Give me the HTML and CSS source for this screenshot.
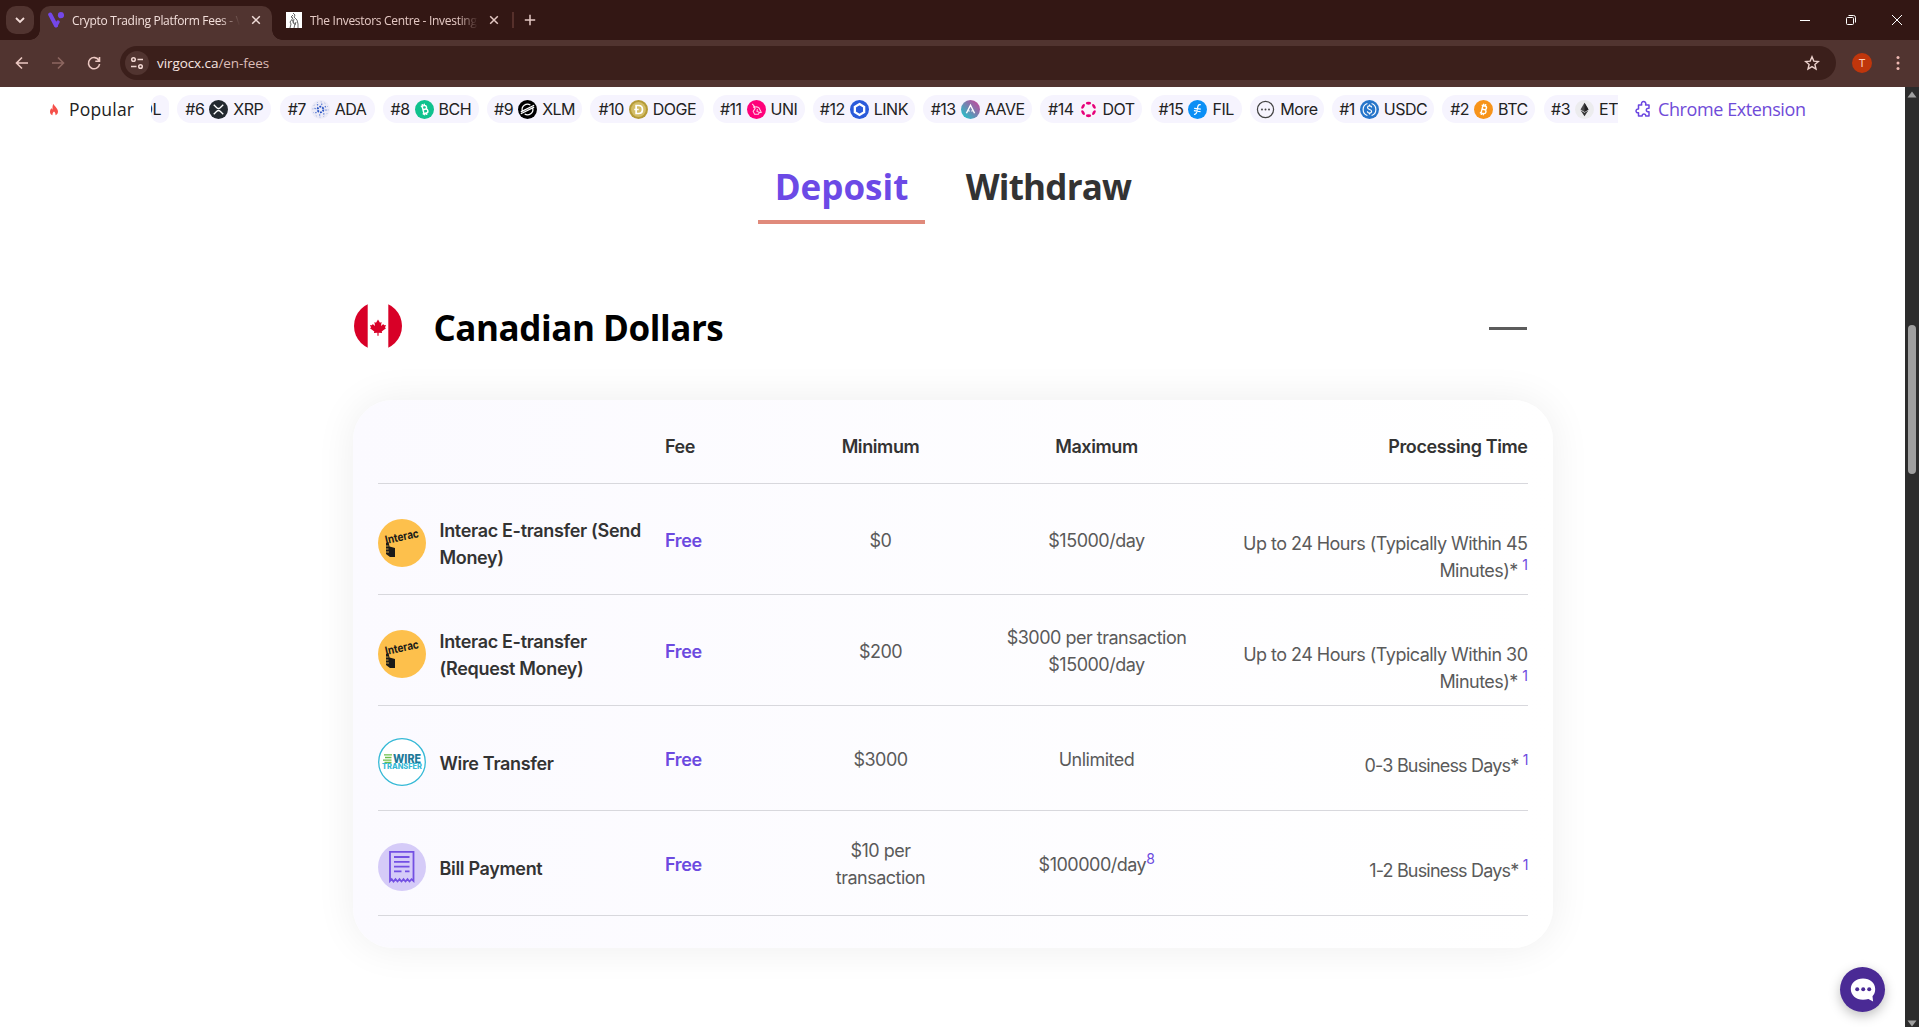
FILE: index.html
```html
<!DOCTYPE html>
<html lang="en">
<head>
    <meta charset="UTF-8">
    <meta name="viewport" content="width=device-width, initial-scale=1.0">
    <title>Crypto Trading Platform Fees - VirgoCX</title>
    <link rel="stylesheet" href="styles.css">
</head>
<body>
    <div class="tabstrip">
        <div class="tab-search">
            <svg width="12" height="12" viewBox="0 0 12 12"><path d="M2 4l4 4 4-4" fill="none" stroke="#f3dcd8" stroke-width="1.8"/></svg>
        </div>
        <div class="tab active">
            <svg class="favicon" width="16" height="16" viewBox="0 0 16 16"><path d="M2.2 2.500L8 13.500" stroke="#7447e8" stroke-width="4" stroke-linecap="round"/><path d="M8 13.500l2-3.500" stroke="#7447e8" stroke-width="3.500" stroke-linecap="round"/><circle cx="13" cy="3.200" r="3.100" fill="#7447e8"/></svg>
            <span class="tab-title">Crypto Trading Platform Fees - V</span>
            <svg class="tab-close" width="10" height="10" viewBox="0 0 10 10"><path d="M1.200 1.200l7.600 7.600M8.800 1.200l-7.600 7.600" stroke="#f0dcd8" stroke-width="1.500"/></svg>
        </div>
        <div class="tab">
            <svg class="favicon" width="16" height="16" viewBox="0 0 16 16"><rect width="16" height="16" fill="#fff"/><path d="M7 1l2 2-1 2 3 3 1 4v4M7 3L5 5l2 1-3 4 1 2-1 4M8 7l-1 4 2 1-1 4M10 10l-1 3M6 8l2 3" fill="none" stroke="#666" stroke-width="1"/></svg>
            <span class="tab-title">The Investors Centre - Investing</span>
            <svg class="tab-close" width="10" height="10" viewBox="0 0 10 10"><path d="M1.200 1.200l7.600 7.600M8.800 1.200l-7.600 7.600" stroke="#e5c9c4" stroke-width="1.500"/></svg>
        </div>
        <div class="tab-divider"></div>
        <svg class="new-tab" width="12" height="12" viewBox="0 0 12 12"><path d="M6 .8v10.400M.8 6h10.400" stroke="#e5c9c4" stroke-width="1.500"/></svg>
        <div class="window-buttons">
            <svg width="12" height="12" viewBox="0 0 12 12"><path d="M1 6.500h10" stroke="#fff"/></svg>
            <svg width="12" height="12" viewBox="0 0 12 12"><rect x="1.500" y="3.500" width="7" height="7" rx="1" fill="none" stroke="#fff"/><path d="M3.500 1.500h5a2 2 0 0 1 2 2v5" fill="none" stroke="#fff"/></svg>
            <svg width="12" height="12" viewBox="0 0 12 12"><path d="M1 1l10 10M11 1L1 11" stroke="#fff"/></svg>
        </div>
    </div>

    <div class="toolbar">
        <svg class="nav-icon" width="16" height="16" viewBox="0 0 16 16"><path d="M14 8H3M8 2.500L2.500 8 8 13.500" fill="none" stroke="#ecc8c2" stroke-width="1.600"/></svg>
        <svg class="nav-icon" width="16" height="16" viewBox="0 0 16 16"><path d="M2 8h11M8 2.500L13.500 8 8 13.500" fill="none" stroke="#8d6660" stroke-width="1.600"/></svg>
        <svg class="nav-icon" width="16" height="16" viewBox="0 0 16 16"><path d="M13 5.500A5.600 5.600 0 1 0 13.600 9M13.500 2v4.200H9.300" fill="none" stroke="#ecc8c2" stroke-width="1.600"/></svg>
        <div class="omnibox">
            <div class="site-info">
                <svg width="14" height="14" viewBox="0 0 14 14" fill="none" stroke="#f0d5d0" stroke-width="1.500"><circle cx="3.500" cy="3.500" r="1.800"/><path d="M7.500 3.500H13M1 10.500h5.500"/><circle cx="10.500" cy="10.500" r="1.800"/></svg>
            </div>
            <span class="url">virgocx.ca<span class="url-path">/en-fees</span></span>
            <svg class="star" width="16" height="16" viewBox="0 0 16 16"><path d="M8 1.800l1.800 4.300 4.600.4-3.500 3 1.100 4.500L8 11.600 4 14l1.100-4.500-3.500-3 4.600-.4z" fill="none" stroke="#ecd2cd" stroke-width="1.400"/></svg>
        </div>
        <div class="avatar">T</div>
        <svg class="menu-dots" width="4" height="16" viewBox="0 0 4 16" fill="#efb9b2"><circle cx="2" cy="2.500" r="1.500"/><circle cx="2" cy="8" r="1.500"/><circle cx="2" cy="13.500" r="1.500"/></svg>
    </div>

    <div class="viewport">
        <div class="page">
            <div class="popular-bar">
                <svg class="flame" width="10" height="13" viewBox="0 0 12 14"><path d="M5.500 0C6 3 10.800 5 10.800 9.300c0 2.500-1.500 4-3.100 4.700.5-2-.4-3.200-1.700-4.600-1.300 1.300-2.300 2.700-1.700 4.600C2.300 13.300 1.200 11.800 1.200 9.700c0-2.200 1.100-3.500 1.700-4.400.3 1 .6 1.500 1.300 1.700C4.200 4.500 4 2 5.500 0z" fill="#f5504a"/></svg>
                <span class="popular-label">Popular</span>
                <div class="ticker">
                    <div class="chip chip-sol"><span>SOL</span></div>
                    <div class="chip chip-94"><span>#6</span>
                        <svg class="coin" viewBox="0 0 20 20"><circle cx="10" cy="10" r="10" fill="#23292f"/><path d="M5 5l3.200 3.100a2.600 2.600 0 0 0 3.600 0L15 5M5 15l3.200-3.100a2.600 2.600 0 0 1 3.600 0L15 15" fill="none" stroke="#fff" stroke-width="1.400"/></svg>
                        <span>XRP</span></div>
                    <div class="chip chip-95"><span>#7</span>
                        <svg class="coin" viewBox="0 0 20 20"><circle cx="10" cy="10" r="10" fill="#ecebf7"/><circle cx="10" cy="10" r="3" fill="none" stroke="#2a55c5" stroke-width="2" stroke-dasharray="2 1.140"/><circle cx="10" cy="10" r="5.800" fill="none" stroke="#4c70cf" stroke-width="1.300" stroke-dasharray="1.300 3.255"/><circle cx="10" cy="10" r="8" fill="none" stroke="#8ca2df" stroke-width="1" stroke-dasharray="1 3.190"/></svg>
                        <span>ADA</span></div>
                    <div class="chip chip-96"><span>#8</span>
                        <svg class="coin" viewBox="0 0 20 20"><circle cx="10" cy="10" r="10" fill="#10c28e"/><g transform="rotate(-14 10 10)" fill="none" stroke="#fff" stroke-width="1.500"><path d="M7 6h3.700a1.900 1.900 0 0 1 0 3.900H8.500 11a2.100 2.100 0 0 1 0 4.200H7M8.400 6v8M9 4v2M11 4v2M9 14v2M11 14v2"/></g></svg>
                        <span>BCH</span></div>
                    <div class="chip chip-95"><span>#9</span>
                        <svg class="coin" viewBox="0 0 20 20"><circle cx="10" cy="10" r="10" fill="#000"/><g fill="none" stroke="#fff" stroke-width="1.300"><path d="M4.500 11.500a5.700 5.700 0 0 1 8.500-6.300M15.500 8.500a5.700 5.700 0 0 1-8.500 6.300M3 12.500L17 5.500M3 14.500l14-7"/></g></svg>
                        <span>XLM</span></div>
                    <div class="chip chip-114"><span>#10</span>
                        <svg class="coin" viewBox="0 0 20 20"><circle cx="10" cy="10" r="10" fill="#b49a36"/><circle cx="10" cy="10" r="7.800" fill="#d3bd67"/><path d="M7.500 5.800h2.700c5.300 0 5.300 8.400 0 8.400H7.500zM5.500 10h4.700" fill="none" stroke="#fff" stroke-width="1.800"/></svg>
                        <span>DOGE</span></div>
                    <div class="chip chip-92"><span>#11</span>
                        <svg class="coin" viewBox="0 0 20 20"><circle cx="10" cy="10" r="10" fill="#ff007a"/><path d="M5.500 4l3 3.500c2-.8 4.500.5 5 2.500l1.500 3-2 .5M6.500 7l2 2-2 3 1.500 3h4l1-2-2.500-1 .5-2.500" fill="none" stroke="#ffd3e7" stroke-width="1.100"/></svg>
                        <span>UNI</span></div>
                    <div class="chip chip-102"><span>#12</span>
                        <svg class="coin" viewBox="0 0 20 20"><circle cx="10" cy="10" r="10" fill="#2a5ada"/><path d="M10 4.300l4.900 2.850v5.700L10 15.700l-4.900-2.850v-5.700z" fill="none" stroke="#fff" stroke-width="2.400"/></svg>
                        <span>LINK</span></div>
                    <div class="chip chip-109"><span>#13</span>
                        <svg class="coin" viewBox="0 0 20 20"><defs><linearGradient id="aave" x1="1" y1="0" x2="0" y2="1"><stop offset=".15" stop-color="#b6509e"/><stop offset=".85" stop-color="#2ebac6"/></linearGradient></defs><circle cx="10" cy="10" r="10" fill="url(#aave)"/><path d="M5.700 14L10 5.500 14.300 14M8 11.500h1M11 11.500h1" fill="none" stroke="#fff" stroke-width="1.500"/></svg>
                        <span>AAVE</span></div>
                    <div class="chip chip-102"><span>#14</span>
                        <svg class="coin" viewBox="0 0 20 20"><circle cx="10" cy="10" r="10" fill="#faf5fb"/><g fill="#e6007a"><ellipse cx="10" cy="3.400" rx="2.800" ry="1.500"/><ellipse cx="10" cy="16.600" rx="2.800" ry="1.500"/><ellipse cx="10" cy="3.400" rx="2.800" ry="1.500" transform="rotate(60 10 10)"/><ellipse cx="10" cy="3.400" rx="2.800" ry="1.500" transform="rotate(120 10 10)"/><ellipse cx="10" cy="3.400" rx="2.800" ry="1.500" transform="rotate(240 10 10)"/><ellipse cx="10" cy="3.400" rx="2.800" ry="1.500" transform="rotate(300 10 10)"/></g></svg>
                        <span>DOT</span></div>
                    <div class="chip chip-91"><span>#15</span>
                        <svg class="coin" viewBox="0 0 20 20"><circle cx="10" cy="10" r="10" fill="#0b8ff5"/><path d="M13.500 5c-3-1-3.300 2-3.700 5s-1.300 5.500-3.500 5M6.500 8.700l7 1M6.200 11.200l7 1" fill="none" stroke="#fff" stroke-width="1.300"/></svg>
                        <span>FIL</span></div>
                    <div class="chip chip-74">
                        <svg class="coin" viewBox="0 0 20 20"><circle cx="10" cy="10" r="8.500" fill="none" stroke="#444" stroke-width="1.300"/><g fill="#444"><circle cx="6.300" cy="10" r="1"/><circle cx="10" cy="10" r="1"/><circle cx="13.700" cy="10" r="1"/></g></svg>
                        <span>More</span></div>
                    <div class="chip chip-102"><span>#1</span>
                        <svg class="coin" viewBox="0 0 20 20"><circle cx="10" cy="10" r="10" fill="#2775ca"/><path d="M7.800 3.600a6.800 6.800 0 0 0 0 12.800M12.200 3.600a6.800 6.800 0 0 1 0 12.800M12.200 8c0-1.300-1-1.800-2.200-1.800S7.900 6.900 7.900 8c0 2.600 4.300 1.300 4.300 3.800 0 1.200-1 1.900-2.200 1.900s-2.200-.6-2.200-1.900M10 4.700v1.500M10 13.700v1.500" fill="none" stroke="#fff" stroke-width="1.200"/></svg>
                        <span>USDC</span></div>
                    <div class="chip chip-93"><span>#2</span>
                        <svg class="coin" viewBox="0 0 20 20"><circle cx="10" cy="10" r="10" fill="#f7931a"/><g transform="rotate(14 10 10)" fill="none" stroke="#fff" stroke-width="1.500"><path d="M7 6h3.700a1.900 1.900 0 0 1 0 3.900H8.500 11a2.100 2.100 0 0 1 0 4.200H7M8.400 6v8M9 4v2M11 4v2M9 14v2M11 14v2"/></g></svg>
                        <span>BTC</span></div>
                    <div class="chip chip-93"><span>#3</span>
                        <svg class="coin" viewBox="0 0 20 20"><circle cx="10" cy="10" r="10" fill="#ececee"/><path d="M10 3l4.200 7L10 12.500 5.800 10z" fill="#4a4a4a"/><path d="M10 3l4.200 7L10 12.500z" fill="#222"/><path d="M5.800 10.900L10 13.400l4.200-2.500L10 17z" fill="#333"/></svg>
                        <span>ETH</span></div>
                </div>
                <a class="extension">
                    <svg width="18" height="18" viewBox="0 0 18 18"><path d="M3.500 4.500h3.200c-.8-2.200.6-3.500 1.900-3.500s2.900 1.300 2 3.500h3.400v3.200c-3.600-.7-3.600 4.300 0 3.600v4.200h-3.300c.5-2.800-4-2.800-3.500 0H3.500v-3.200c-3.300.6-3.300-4.200 0-3.800z" transform="translate(1 .5)" fill="none" stroke="#6a45e0" stroke-width="1.500" stroke-linejoin="round"/></svg>
                    <span>Chrome Extension</span>
                </a>
            </div>

            <div class="fee-tabs">
                <div class="fee-tab selected">Deposit</div>
                <div class="fee-tab">Withdraw</div>
            </div>

            <div class="currency-header">
                <svg class="flag" width="48" height="48" viewBox="0 0 48 48"><clipPath id="round"><circle cx="24" cy="24" r="24"/></clipPath><g clip-path="url(#round)"><path fill="#fff" d="M0 0h48v48H0z"/><path fill="#d80027" d="M0 0h13.700v48H0zM34.300 0H48v48H34.300z"/><path fill="#d80027" d="M24 17.500l2 3.200 1.600-.8-.6 4 2.300-1.900.7 1.200 2-.2-1 2.500 1 .7-4.300 3.400.4 1.400-3.500-.3v3h-1.200v-3l-3.500.3.400-1.400-4.300-3.400 1-.7-1-2.500 2 .2.700-1.200 2.300 1.900-.6-4 1.600.8z"/></g></svg>
                <h2>Canadian Dollars</h2>
                <span class="collapse"></span>
            </div>

            <div class="fee-card">
                <div class="fee-row head">
                    <div></div>
                    <div>Fee</div>
                    <div class="center">Minimum</div>
                    <div class="center">Maximum</div>
                    <div class="right">Processing Time</div>
                </div>
                <div class="fee-row tall">
                    <div class="method">
                        <svg class="method-icon" viewBox="0 0 48 48"><circle cx="24" cy="24" r="24" fill="#fdc04c"/><text x="8" y="25" transform="rotate(-12 8 25)" textLength="34" lengthAdjust="spacingAndGlyphs" class="interac-text">Interac</text><path d="M8 24l2.500-1 1 4.500 5.500 1.500v9h-5l-4-3z" fill="#1b1a17"/><path d="M7.500 27h3M7.500 30h3M8 33h3" stroke="#fdc04c" stroke-width=".8"/></svg>
                        <span>Interac E-transfer (Send<br>Money)</span>
                    </div>
                    <div class="free">Free</div>
                    <div class="center">$0</div>
                    <div class="center">$15000/day</div>
                    <div class="right">Up to 24 Hours (Typically Within 45<br>Minutes)* <sup>1</sup></div>
                </div>
                <div class="fee-row tall">
                    <div class="method">
                        <svg class="method-icon" viewBox="0 0 48 48"><circle cx="24" cy="24" r="24" fill="#fdc04c"/><text x="8" y="25" transform="rotate(-12 8 25)" textLength="34" lengthAdjust="spacingAndGlyphs" class="interac-text">Interac</text><path d="M8 24l2.500-1 1 4.500 5.500 1.500v9h-5l-4-3z" fill="#1b1a17"/><path d="M7.500 27h3M7.500 30h3M8 33h3" stroke="#fdc04c" stroke-width=".8"/></svg>
                        <span>Interac E-transfer<br>(Request Money)</span>
                    </div>
                    <div class="free">Free</div>
                    <div class="center">$200</div>
                    <div class="center">$3000 per transaction<br>$15000/day</div>
                    <div class="right">Up to 24 Hours (Typically Within 30<br>Minutes)* <sup>1</sup></div>
                </div>
                <div class="fee-row">
                    <div class="method">
                        <svg class="method-icon" viewBox="0 0 48 48"><circle cx="24" cy="24" r="23.300" fill="#fff" stroke="#35b9d6" stroke-width="1.300"/><path d="M6 16.800h8M7 19.500h6.500M5 22.200h8.500M6.500 24.500h7" stroke="#6cc04a" stroke-width="1.300"/><text x="15" y="24.800" textLength="28" lengthAdjust="spacingAndGlyphs" class="wire-text">WIRE</text><text x="4" y="31.200" textLength="40" lengthAdjust="spacingAndGlyphs" class="transfer-text">TRANSFER</text></svg>
                        <span>Wire Transfer</span>
                    </div>
                    <div class="free">Free</div>
                    <div class="center">$3000</div>
                    <div class="center">Unlimited</div>
                    <div class="right days">0-3 Business Days* <sup>1</sup></div>
                </div>
                <div class="fee-row">
                    <div class="method">
                        <svg class="method-icon" viewBox="0 0 48 48"><circle cx="24" cy="24" r="24" fill="#d5cbf8"/><path d="M12 38V8.800h23.500V38l-2-1.800-2 2.300-2-2.300-2 2.300-2-2.300-2 2.300-2-2.300-2 2.300-2-2.300-2 2.300-1.800-2.300zM16 14h15.500M16 18.800h15.500M16 23.600h15.500M16 28.400h7.500M27 28.400h4.500" fill="none" stroke="#7350e3" stroke-width="1.800"/></svg>
                        <span>Bill Payment</span>
                    </div>
                    <div class="free">Free</div>
                    <div class="center">$10 per<br>transaction</div>
                    <div class="center">$100000/day<sup>8</sup></div>
                    <div class="right days">1-2 Business Days* <sup>1</sup></div>
                </div>
            </div>

            <div class="chat-button">
                <svg width="26" height="26" viewBox="0 0 26 26"><path d="M13 1.500c7 0 12.200 4.500 12.200 10.500 0 3.200-1 5.500-2.700 7.300l.6 5.200-4.700-2.600c-1.600.5-3.400.8-5.400.8C6 22.700.8 18.200.8 12S6 1.500 13 1.500z" fill="#fff"/><g fill="#4a2a95"><circle cx="7.200" cy="12.300" r="2"/><circle cx="13.200" cy="12.300" r="2"/><circle cx="19.200" cy="12.300" r="2"/></g></svg>
            </div>
        </div>
        <div class="scrollbar">
            <svg width="10" height="7" viewBox="0 0 10 7"><path d="M5 .5L9.500 6.500h-9z" fill="#a0a0a0"/></svg>
            <div class="thumb"></div>
            <svg class="arrow-down" width="10" height="7" viewBox="0 0 10 7"><path d="M5 6.500L.5 .5h9z" fill="#a0a0a0"/></svg>
        </div>
    </div>
</body>
</html>
```
FILE: styles.css
```css
* {
    margin: 0;
    padding: 0;
    box-sizing: border-box;
}

body {
    height: 1027px;
    display: flex;
    flex-direction: column;
    overflow: hidden;
    background: #fff;
    font-family: Inter, "Liberation Sans", sans-serif;
    color: #333;
}

svg {
    display: block;
    flex-shrink: 0;
}

/* browser tabs */
.tabstrip {
    height: 40px;
    display: flex;
    align-items: center;
    padding: 0 16px 0 6px;
    background: #331714;
    font-family: "Open Sans", sans-serif;
    font-size: 12px;
}

.tab-search {
    width: 28px;
    height: 28px;
    border-radius: 10px;
    background: #513430;
    display: flex;
    align-items: center;
    justify-content: center;
}

.tab {
    width: 232px;
    height: 34px;
    margin-top: 6px;
    padding: 0 11px 6px 8px;
    display: flex;
    align-items: center;
    color: #e5c9c4;
}

.tab.active {
    margin-left: 6px;
    margin-right: 6px;
    background: #513430;
    border-radius: 10px 10px 0 0;
    color: #f3dfdb;
    position: relative;
}

/* curved feet of the selected tab */
.tab.active::before,
.tab.active::after {
    content: "";
    position: absolute;
    bottom: 0;
    width: 10px;
    height: 10px;
}

.tab.active::before {
    left: -10px;
    background: radial-gradient(circle at 0 0, transparent 9.5px, #513430 10px);
}

.tab.active::after {
    right: -10px;
    background: radial-gradient(circle at 100% 0, transparent 9.5px, #513430 10px);
}

.favicon {
    margin-right: 8px;
}

.tab-title {
    width: 168px;
    overflow: hidden;
    white-space: nowrap;
    letter-spacing: -0.3px;
    -webkit-mask-image: linear-gradient(to right, #000 88%, transparent);
    mask-image: linear-gradient(to right, #000 88%, transparent);
}

.tab-close {
    margin-left: auto;
}

.tab-divider {
    width: 2px;
    height: 16px;
    margin-left: 2px;
    background: #56302b;
}

.new-tab {
    margin-left: 10px;
}

.window-buttons {
    margin-left: auto;
    display: flex;
    gap: 34px;
}

/* address bar */
.toolbar {
    height: 47px;
    display: flex;
    align-items: center;
    padding: 0 19px 1px 14px;
    background: #513430;
}

.nav-icon {
    margin-right: 20px;
}

.omnibox {
    width: 1716px;
    height: 34px;
    margin-left: -2px;
    padding: 0 16px 0 5px;
    display: flex;
    align-items: center;
    background: #3b1f1b;
    border-radius: 17px;
}

.site-info {
    width: 24px;
    height: 24px;
    margin-right: 8px;
    border-radius: 50%;
    background: #513430;
    display: flex;
    align-items: center;
    justify-content: center;
}

.url {
    font-family: "Open Sans", sans-serif;
    font-size: 13.5px;
    letter-spacing: -0.08px;
    color: #f8e5e1;
}

.url-path {
    color: #dcbcb7;
}

.star {
    margin-left: auto;
}

.avatar {
    width: 20px;
    height: 20px;
    margin-left: 16px;
    border-radius: 50%;
    background: #bf360c;
    color: #ffd0bc;
    font-size: 11px;
    line-height: 20px;
    text-align: center;
}

.menu-dots {
    margin-left: auto;
}

/* page area and scrollbar */
.viewport {
    flex: 1;
    display: flex;
}

.page {
    width: 1905px;
    position: relative;
}

.scrollbar {
    width: 14px;
    padding: 4px 0 0;
    display: flex;
    flex-direction: column;
    align-items: center;
    background: #2c2c2c;
}

.thumb {
    width: 8px;
    height: 149px;
    margin-top: 227px;
    border-radius: 4px;
    background: #9f9f9f;
}

.arrow-down {
    margin-top: auto;
}

/* popular coins */
.popular-bar {
    height: 44px;
    padding-left: 49px;
    display: flex;
    align-items: center;
}

.popular-label {
    width: 82px;
    margin-left: 10px;
    font-family: "Open Sans", sans-serif;
    font-size: 17.5px;
    font-weight: 500;
    letter-spacing: 0.2px;
    color: #222;
}

.ticker {
    width: 1467px;
    display: flex;
    gap: 8.28px;
    overflow: hidden;
}

.chip {
    height: 28px;
    flex-shrink: 0;
    display: flex;
    align-items: center;
    justify-content: center;
    gap: 5px;
    border-radius: 14px;
    background: #f6f4fe;
    font-size: 16px;
    letter-spacing: -0.5px;
    color: #222;
}

.chip-sol {
    width: 18px;
    justify-content: flex-end;
    padding-right: 8px;
}

.chip-74 { width: 74px; }
.chip-91 { width: 91px; }
.chip-92 { width: 92px; }
.chip-93 { width: 93px; }
.chip-94 { width: 94px; }
.chip-95 { width: 95px; }
.chip-96 { width: 96px; }
.chip-102 { width: 102px; }
.chip-109 { width: 109px; }
.chip-114 { width: 114px; }

.coin {
    width: 19px;
    height: 19px;
}

.extension {
    margin-left: 16px;
    display: flex;
    align-items: center;
    gap: 6px;
    font-family: "Open Sans", sans-serif;
    font-size: 18px;
    letter-spacing: -0.4px;
    color: #6f4bd8;
}

/* deposit / withdraw switch */
.fee-tabs {
    margin-top: 21px;
    padding-left: 2px;
    display: flex;
    justify-content: center;
    gap: 23px;
    font-family: "Open Sans", sans-serif;
    font-size: 35px;
    font-weight: 700;
}

.fee-tab {
    width: 201px;
    height: 72px;
    line-height: 69px;
    text-align: center;
    letter-spacing: -0.8px;
    color: #333;
}

.fee-tab.selected {
    width: 167px;
    letter-spacing: 0;
    color: #6c4ae6;
    border-bottom: 4px solid #e08a7b;
}

.currency-header {
    width: 1200px;
    height: 48px;
    margin: 78px auto 0;
    padding-left: 1px;
    display: flex;
    align-items: center;
}

.currency-header h2 {
    margin: 4px 0 0 32px;
    font-family: "Open Sans", sans-serif;
    font-size: 35px;
    line-height: 48px;
    letter-spacing: -0.45px;
    color: #000;
}

.collapse {
    width: 38px;
    height: 3px;
    margin: 5px 26px 0 auto;
    background: #5c5c5c;
}

/* fee table */
.fee-card {
    width: 1200px;
    height: 548px;
    margin: 50px auto 0;
    padding: 0 25px;
    border-radius: 40px;
    background: linear-gradient(to right, #fbfaff, #fff);
    box-shadow: 0 0 40px rgba(0, 0, 0, 0.07);
    font-size: 18px;
    line-height: 27px;
}

.fee-row {
    height: 105px;
    padding-top: 2px;
    display: grid;
    grid-template-columns: 287.5px 107.5px 216px 216px 323px;
    align-items: center;
    border-bottom: 1px solid #d8d8dd;
    color: #5a5a5a;
    letter-spacing: -0.5px;
}

.fee-row.tall {
    height: 111px;
}

.fee-row.head {
    height: 84px;
    padding-top: 10px;
    font-weight: 600;
    letter-spacing: -0.4px;
    color: #333;
}

.center {
    text-align: center;
}

.right {
    text-align: right;
    padding-top: 12px;
}

.head .right {
    padding-top: 0;
}

.tall .right {
    padding-top: 33px;
    letter-spacing: -0.53px;
}

.right.days {
    letter-spacing: -0.82px;
}

.method {
    display: flex;
    align-items: center;
    gap: 14px;
    font-weight: 600;
    letter-spacing: -0.33px;
    color: #333;
    padding-top: 6px;
}

.method span {
    padding-top: 2px;
}

.method-icon {
    width: 48px;
    height: 48px;
}

.free {
    font-weight: 600;
    letter-spacing: -0.35px;
    color: #6c4ae0;
}

sup {
    font-size: 14px;
    line-height: 0;
    vertical-align: 7px;
    color: #6c4ae0;
}

.interac-text {
    font-size: 11.5px;
    font-weight: 700;
    letter-spacing: 0;
    fill: #1b1a17;
}

.wire-text {
    font-size: 11.5px;
    font-weight: 800;
    letter-spacing: 0;
    fill: #1c7a99;
}

.transfer-text {
    font-size: 7.5px;
    font-weight: 800;
    letter-spacing: 0;
    fill: #35b9d6;
}

.chat-button {
    position: absolute;
    left: 1840px;
    top: 880px;
    width: 45px;
    height: 45px;
    border-radius: 50%;
    background: #4a2a95;
    box-shadow: 0 4px 12px rgba(0, 0, 0, 0.25);
    display: flex;
    align-items: center;
    justify-content: center;
}
```
